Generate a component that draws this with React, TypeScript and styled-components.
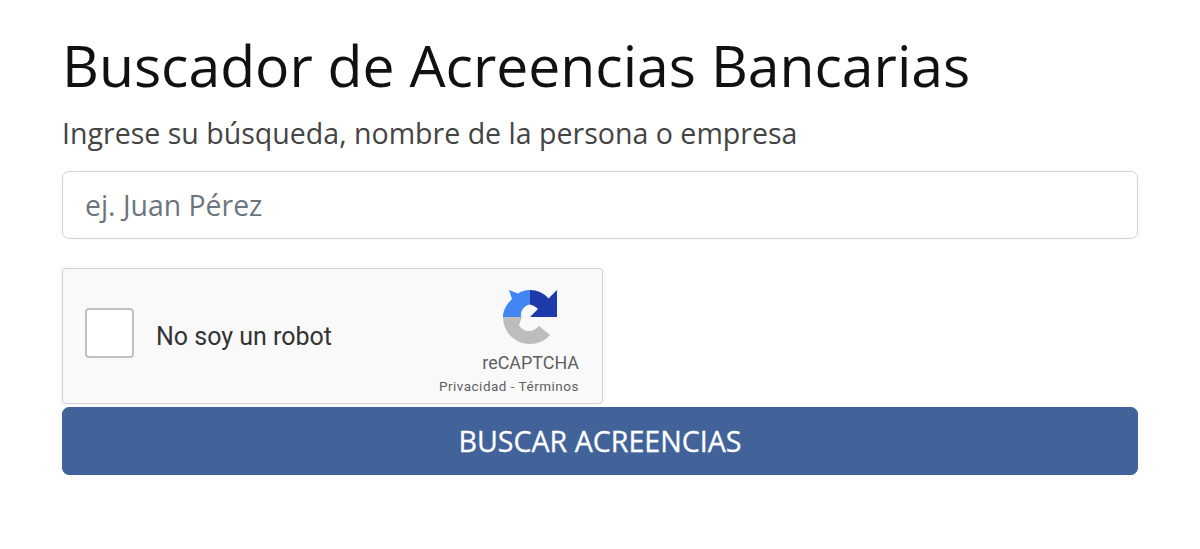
import React from "react";
import styled, { createGlobalStyle } from "styled-components";

const Global = createGlobalStyle`
  html, body {
    margin: 0;
    padding: 0;
    background: #fff;
    font-family: "Open Sans", sans-serif;
  }
`;

const Page = styled.div`
  width: 1076px;
  margin-left: 62px;
  padding-top: 27px;
`;

const Title = styled.h1`
  margin: 0;
  font-size: 57.1px;
  line-height: 76px;
  font-weight: 400;
  color: #111;
  white-space: nowrap;
`;

const Label = styled.label`
  display: block;
  margin-top: 12px;
  font-size: 28.55px;
  line-height: 36px;
  color: #444;
  white-space: nowrap;
`;

const Input = styled.input`
  display: block;
  box-sizing: border-box;
  width: 100%;
  height: 68px;
  margin-top: 20px;
  padding: 0 22px;
  border: 1px solid #ced4da;
  border-radius: 7px;
  font-family: "Open Sans", sans-serif;
  font-size: 28.4px;
  color: #495057;
  background: #fff;
  outline: none;

  &::placeholder {
    color: #6c757d;
    opacity: 1;
  }
`;

const Captcha = styled.div`
  box-sizing: border-box;
  display: flex;
  align-items: center;
  justify-content: space-between;
  width: 541px;
  height: 136px;
  margin-top: 29px;
  padding: 0 23px 0 22px;
  background: #f9f9f9;
  border: 1px solid #d3d3d3;
  border-radius: 4px;
  box-shadow: 0 0 5px rgba(0, 0, 0, 0.08);
`;

const CheckRow = styled.div`
  display: flex;
  align-items: center;
  gap: 22px;
`;

const Check = styled.div`
  box-sizing: border-box;
  width: 49px;
  height: 50px;
  margin-top: -6px;
  background: #fff;
  border: 2px solid #c1c1c1;
  border-radius: 4px;
`;

const CheckText = styled.span`
  font-family: Roboto, sans-serif;
  font-size: 25px;
  color: #333;
`;

const Brand = styled.div`
  display: flex;
  flex-direction: column;
  align-items: flex-end;
  padding-top: 13px;
`;

const LogoHolder = styled.div`
  display: flex;
  margin-right: 22px;
`;

const BrandName = styled.div`
  margin-top: 8px;
  font-family: Roboto, sans-serif;
  font-size: 17.9px;
  line-height: 22px;
  color: #5f5f5f;
`;

const BrandLinks = styled.div`
  margin-top: 3px;
  font-family: Roboto, sans-serif;
  font-size: 13.5px;
  line-height: 18px;
  letter-spacing: 0.5px;
  color: #5f5f5f;
  white-space: nowrap;
`;

const SubmitButton = styled.button`
  display: block;
  width: 100%;
  height: 68px;
  margin-top: 3px;
  padding-bottom: 3px;
  border: 1px solid #3f6298;
  border-radius: 7px;
  background: #41639a;
  color: #fff;
  font-family: "Open Sans", sans-serif;
  font-size: 28.6px;
  -webkit-text-stroke: 0.3px #fff;
`;

const CaptchaLogo = () => (
  <svg width="54" height="54" viewBox="0 0 54 54">
    <path
      fill="#1c3aa9"
      d="M27 0C34 0 41 3 45.500 8.500L54 0V27H27L35 19C33 17 30 15 27 14.500Z"
    />
    <path
      fill="#4285f4"
      d="M27 0C22 0 18 1.500 15 3.500L6 0 9 9C4 14 0 20 0 27H18C17 21 21 15.500 27 14.500Z"
    />
    <path
      fill="#bdbdbd"
      d="M0 27H19L16 35C18 39 22 41 27 41 30 41 33 39 36 36L47 45C42 51 34 54 27 54 12 54 0 42 0 27Z"
    />
  </svg>
);

export default function App() {
  return (
    <Page>
      <Global />
      <Title>Buscador de Acreencias Bancarias</Title>
      <Label>Ingrese su búsqueda, nombre de la persona o empresa</Label>
      <Input placeholder="ej. Juan Pérez" />
      <Captcha>
        <CheckRow>
          <Check />
          <CheckText>No soy un robot</CheckText>
        </CheckRow>
        <Brand>
          <LogoHolder>
            <CaptchaLogo />
          </LogoHolder>
          <BrandName>reCAPTCHA</BrandName>
          <BrandLinks>Privacidad - Términos</BrandLinks>
        </Brand>
      </Captcha>
      <SubmitButton>BUSCAR ACREENCIAS</SubmitButton>
    </Page>
  );
}
